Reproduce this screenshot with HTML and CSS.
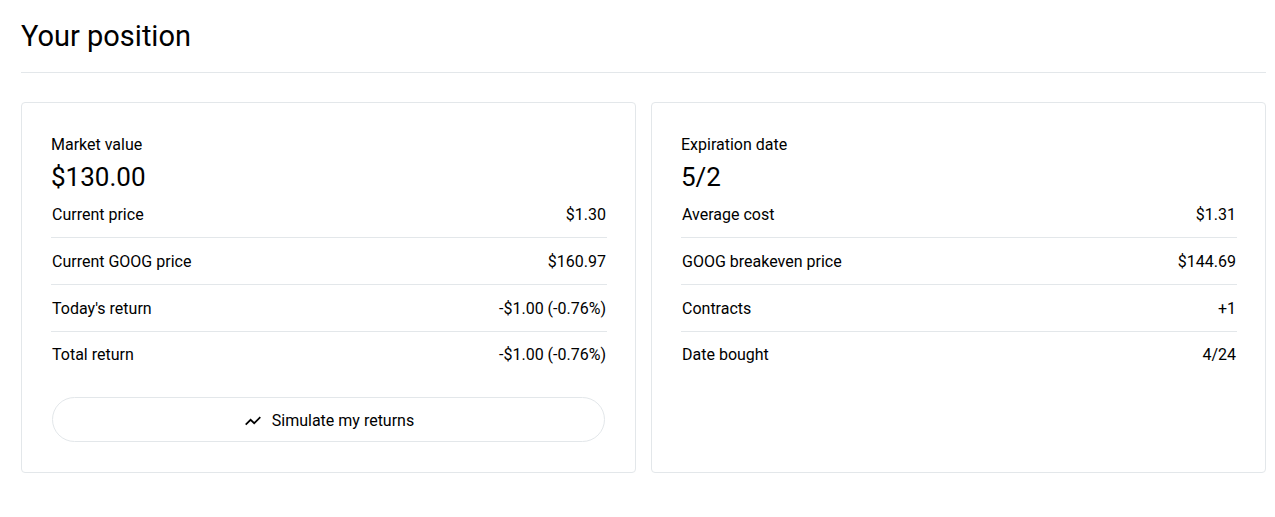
FILE: index.html
```html
<!DOCTYPE html>
<html lang="en">
<head>
<meta charset="utf-8">
<meta name="viewport" content="width=device-width, initial-scale=1">
<title>Your position</title>
<link rel="stylesheet" href="styles.css">
</head>
<body>
<main class="position">
  <h1 class="position-title">Your position</h1>
  <div class="cards">
    <section class="card">
      <h2 class="card-label">Market value</h2>
      <p class="card-value">$130.00</p>
      <table class="stats">
        <tbody>
          <tr><th scope="row">Current price</th><td>$1.30</td></tr>
          <tr><th scope="row">Current GOOG price</th><td>$160.97</td></tr>
          <tr><th scope="row">Today's return</th><td>-$1.00 (-0.76%)</td></tr>
          <tr><th scope="row">Total return</th><td>-$1.00 (-0.76%)</td></tr>
        </tbody>
      </table>
      <button class="simulate" type="button">
        <svg class="simulate-icon" viewBox="0 0 16 16" aria-hidden="true"><path d="M.7 11.6 5.6 6.8 9.2 10.2 15.3 4.2"/></svg>
        <span>Simulate my returns</span>
      </button>
    </section>
    <section class="card">
      <h2 class="card-label">Expiration date</h2>
      <p class="card-value">5/2</p>
      <table class="stats">
        <tbody>
          <tr><th scope="row">Average cost</th><td>$1.31</td></tr>
          <tr><th scope="row">GOOG breakeven price</th><td>$144.69</td></tr>
          <tr><th scope="row">Contracts</th><td>+1</td></tr>
          <tr><th scope="row">Date bought</th><td>4/24</td></tr>
        </tbody>
      </table>
    </section>
  </div>
</main>
</body>
</html>
```

FILE: styles.css
```css
* { box-sizing: border-box; }

body {
  margin: 0;
  background: #fff;
  color: #000;
  font-family: Roboto, "Liberation Sans", sans-serif;
  font-size: 16px;
  line-height: 24px;
}

.position { padding: 16px 9px 44px 21px; }

.position-title {
  margin: 0 0 29px;
  padding-bottom: 16px;
  border-bottom: 1px solid #e3e7ea;
  font-size: 29px;
  font-weight: 400;
  line-height: 40px;
}

.cards {
  display: grid;
  grid-template-columns: 1fr 1fr;
  gap: 15px;
}

.card {
  padding: 30px 28px 30px 29px;
  border: 1px solid #e3e7ea;
  border-radius: 4px;
}

.card-label {
  margin: 0;
  font-size: 16px;
  font-weight: 400;
}

.card-value {
  margin: 4px 0;
  font-size: 26px;
  line-height: 32px;
}

.stats {
  width: 100%;
  border-collapse: collapse;
}

.stats th,
.stats td {
  height: 47px;
  padding: 2px 1px 0;
  font-weight: 400;
  text-align: left;
}

.stats td { text-align: right; }

.stats tr + tr { border-top: 1px solid #e3e7ea; }

.stats tr:first-child th,
.stats tr:first-child td { height: 40px; padding: 0 1px 4px; }

.stats tr:last-child th,
.stats tr:last-child td { height: 46px; }

.simulate {
  display: flex;
  align-items: center;
  justify-content: center;
  gap: 11px;
  width: calc(100% - 3px);
  height: 45px;
  margin: 20px 0 0 1px;
  padding: 2px 0 0 2px;
  border: 1px solid #e3e7ea;
  border-radius: 24px;
  background: #fff;
  color: #000;
  font: inherit;
}

.simulate-icon {
  width: 16px;
  height: 16px;
  fill: none;
  stroke: currentColor;
  stroke-width: 1.7;
}
```
